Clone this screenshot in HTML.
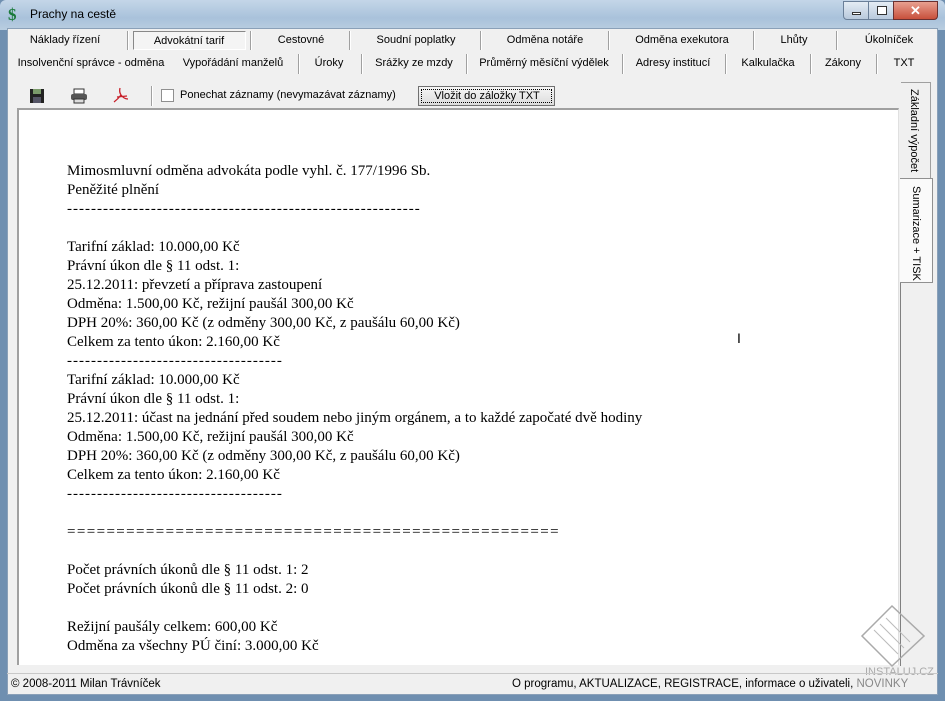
<!DOCTYPE html>
<html><head><meta charset="utf-8"><style>
*{margin:0;padding:0;box-sizing:border-box}
body{width:945px;height:701px;overflow:hidden;background:#6f8fb0;font-family:"Liberation Sans",sans-serif;font-size:11px;color:#000;position:relative}
.abs{position:absolute}
#title{left:0;top:0;width:945px;height:30px;background:linear-gradient(#c4d6e8,#a9c2db 60%,#b9cde0);border-radius:6px 6px 0 0}
#body{left:7px;top:28px;width:931px;height:667px;background:#f0f0f0;border:1px solid #8aa0b8}
.t{position:absolute;white-space:nowrap;transform:translateX(-50%)}
.sep{position:absolute;width:2px;border-left:1px solid #a0a0a0;border-right:1px solid #fff}
#txt{left:17px;top:108px;width:882px;height:557px;background:#fff;border-top:2px solid #a0a0a0;border-left:2px solid #a0a0a0;border-right:1px solid #e0e0e0}
#txt pre{position:absolute;left:48px;top:52px;font-family:"Liberation Serif",serif;font-size:15px;line-height:19px}
.d{letter-spacing:1px}
.e{letter-spacing:1.4px}
.btn{position:absolute;border:1px solid #707070;background:linear-gradient(#f6f6f6,#dcdcdc);}
</style></head><body>
<div id="title" class="abs">
 <div class="abs" style="left:8px;top:6px;width:18px;height:18px;color:#1a7a3a;font:bold 17px 'Liberation Serif',serif;line-height:18px">$</div>
 <div class="abs" style="left:30px;top:7px;font-size:12px">Prachy na cestě</div>
 <div class="abs" style="left:843px;top:1px;width:26px;height:19px;border:1px solid #6a7f98;border-radius:0 0 0 4px;background:linear-gradient(#e4ecf4,#b8c9dc)"><div class="abs" style="left:8px;top:10px;width:9px;height:3px;background:#fff;border:1px solid #333"></div></div>
 <div class="abs" style="left:868px;top:1px;width:26px;height:19px;border:1px solid #6a7f98;background:linear-gradient(#e4ecf4,#b8c9dc)"><div class="abs" style="left:8px;top:4px;width:10px;height:9px;border:1px solid #333;background:#fff"></div></div>
 <div class="abs" style="left:893px;top:1px;width:45px;height:19px;border:1px solid #6a3030;border-radius:0 0 4px 0;background:linear-gradient(#e8a090,#c8503c);color:#fff;font:bold 13px sans-serif;text-align:center;line-height:17px">✕</div>
</div>
<div id="body" class="abs"></div>

<div class="abs" style="left:133px;top:31px;width:113px;height:19px;border:1px solid #888;border-right-color:#fff;border-bottom-color:#fff;background:#f4f4f4"></div>
<div class="t" style="left:65px;top:34px">Náklady řízení</div>
<div class="t" style="left:189px;top:35px">Advokátní tarif</div>
<div class="t" style="left:301px;top:34px">Cestovné</div>
<div class="t" style="left:416px;top:34px">Soudní poplatky</div>
<div class="t" style="left:545px;top:34px">Odměna notáře</div>
<div class="t" style="left:682px;top:34px">Odměna exekutora</div>
<div class="t" style="left:794px;top:34px">Lhůty</div>
<div class="t" style="left:889px;top:34px">Úkolníček</div>
<div class="sep" style="left:127px;top:31px;height:19px"></div>
<div class="sep" style="left:250px;top:31px;height:19px"></div>
<div class="sep" style="left:349px;top:31px;height:19px"></div>
<div class="sep" style="left:480px;top:31px;height:19px"></div>
<div class="sep" style="left:608px;top:31px;height:19px"></div>
<div class="sep" style="left:753px;top:31px;height:19px"></div>
<div class="sep" style="left:836px;top:31px;height:19px"></div>
<div class="t" style="left:91px;top:57px">Insolvenční správce - odměna</div>
<div class="t" style="left:233px;top:57px">Vypořádání manželů</div>
<div class="t" style="left:329px;top:57px">Úroky</div>
<div class="t" style="left:414px;top:57px">Srážky ze mzdy</div>
<div class="t" style="left:544px;top:57px">Průměrný měsíční výdělek</div>
<div class="t" style="left:673px;top:57px">Adresy institucí</div>
<div class="t" style="left:768px;top:57px">Kalkulačka</div>
<div class="t" style="left:843px;top:57px">Zákony</div>
<div class="t" style="left:904px;top:57px">TXT</div>
<div class="sep" style="left:298px;top:54px;height:20px"></div>
<div class="sep" style="left:361px;top:54px;height:20px"></div>
<div class="sep" style="left:466px;top:54px;height:20px"></div>
<div class="sep" style="left:622px;top:54px;height:20px"></div>
<div class="sep" style="left:725px;top:54px;height:20px"></div>
<div class="sep" style="left:810px;top:54px;height:20px"></div>
<div class="sep" style="left:876px;top:54px;height:20px"></div>

<svg class="abs" style="left:29px;top:88px" width="16" height="16"><rect x="1" y="1" width="14" height="14" fill="#222"/><rect x="4" y="1" width="8" height="5" fill="#7a9a6a"/><rect x="4" y="9" width="8" height="6" fill="#556"/></svg>
<svg class="abs" style="left:70px;top:88px" width="18" height="16"><rect x="4" y="1" width="10" height="5" fill="#fff" stroke="#333"/><rect x="1" y="6" width="16" height="6" rx="2" fill="#555"/><rect x="4" y="11" width="10" height="4" fill="#ddd" stroke="#333"/></svg>
<svg class="abs" style="left:112px;top:86px" width="18" height="18"><path d="M8 2 Q7 6 9 9 Q12 13 16 13 M9 9 Q6 13 2 16 M5 11 L15 10" stroke="#c8202a" stroke-width="1.3" fill="none"/></svg>
<div class="sep" style="left:151px;top:86px;height:20px"></div>
<div class="abs" style="left:161px;top:89px;width:13px;height:13px;border:1px solid #8f8f8f;background:#fff"></div>
<div class="abs" style="left:180px;top:89px">Ponechat záznamy (nevymazávat záznamy)</div>
<div class="btn" style="left:418px;top:86px;width:137px;height:20px"><div class="abs" style="left:2px;top:2px;right:2px;bottom:2px;border:1px dotted #000"></div><div class="t" style="left:68px;top:3px">Vložit do záložky TXT</div></div>

<div id="txt" class="abs"><pre>Mimosmluvní odměna advokáta podle vyhl. č. 177/1996 Sb.
Peněžité plnění
<span class="d">-----------------------------------------------------------</span>

Tarifní základ: 10.000,00 Kč
Právní úkon dle § 11 odst. 1:
25.12.2011: převzetí a příprava zastoupení
Odměna: 1.500,00 Kč, režijní paušál 300,00 Kč
DPH 20%: 360,00 Kč (z odměny 300,00 Kč, z paušálu 60,00 Kč)
Celkem za tento úkon: 2.160,00 Kč
<span class="d">------------------------------------</span>
Tarifní základ: 10.000,00 Kč
Právní úkon dle § 11 odst. 1:
25.12.2011: účast na jednání před soudem nebo jiným orgánem, a to každé započaté dvě hodiny
Odměna: 1.500,00 Kč, režijní paušál 300,00 Kč
DPH 20%: 360,00 Kč (z odměny 300,00 Kč, z paušálu 60,00 Kč)
Celkem za tento úkon: 2.160,00 Kč
<span class="d">------------------------------------</span>

<span class="e">==================================================</span>

Počet právních úkonů dle § 11 odst. 1: 2
Počet právních úkonů dle § 11 odst. 2: 0

Režijní paušály celkem: 600,00 Kč
Odměna za všechny PÚ činí: 3.000,00 Kč</pre>
<div class="abs" style="left:718px;top:220px;font-size:14px">I</div>
</div>

<div class="abs" style="left:900px;top:282px;width:1px;height:384px;background:#808080"></div>
<div class="abs" style="left:901px;top:82px;width:30px;height:97px;border:1px solid #a0a0a0;border-left:none;background:#f0f0f0"></div>
<div class="abs" style="left:900px;top:178px;width:33px;height:105px;border:1px solid #909090;border-left:none;background:#fafafa"></div>
<div class="abs" style="left:908px;top:89px;writing-mode:vertical-rl;font-size:11px">Základní výpočet</div>
<div class="abs" style="left:910px;top:186px;writing-mode:vertical-rl;font-size:11px">Sumarizace + TISK</div>

<svg class="abs" style="left:860px;top:604px" width="68" height="64"><path d="M32 2 L64 32 L32 62 L2 32 Z" fill="none" stroke="#aaa" stroke-width="1.5"/><path d="M20 20 L44 44 M26 14 L50 38 M14 26 L38 50" stroke="#bbb"/></svg>
<div class="abs" style="left:865px;top:666px;color:#aaa;font-size:11px">INSTALUJ.CZ</div>

<div class="abs" style="left:7px;top:673px;width:931px;height:1px;background:#c8c8c8"></div>
<div class="abs" style="left:11px;top:678px;font-size:11.5px">© 2008-2011 Milan Trávníček</div>
<div class="abs" style="left:512px;top:678px;font-size:11.5px">O programu, AKTUALIZACE, REGISTRACE, informace o uživateli, <span style="color:#888">NOVINKY</span></div>
</body></html>
